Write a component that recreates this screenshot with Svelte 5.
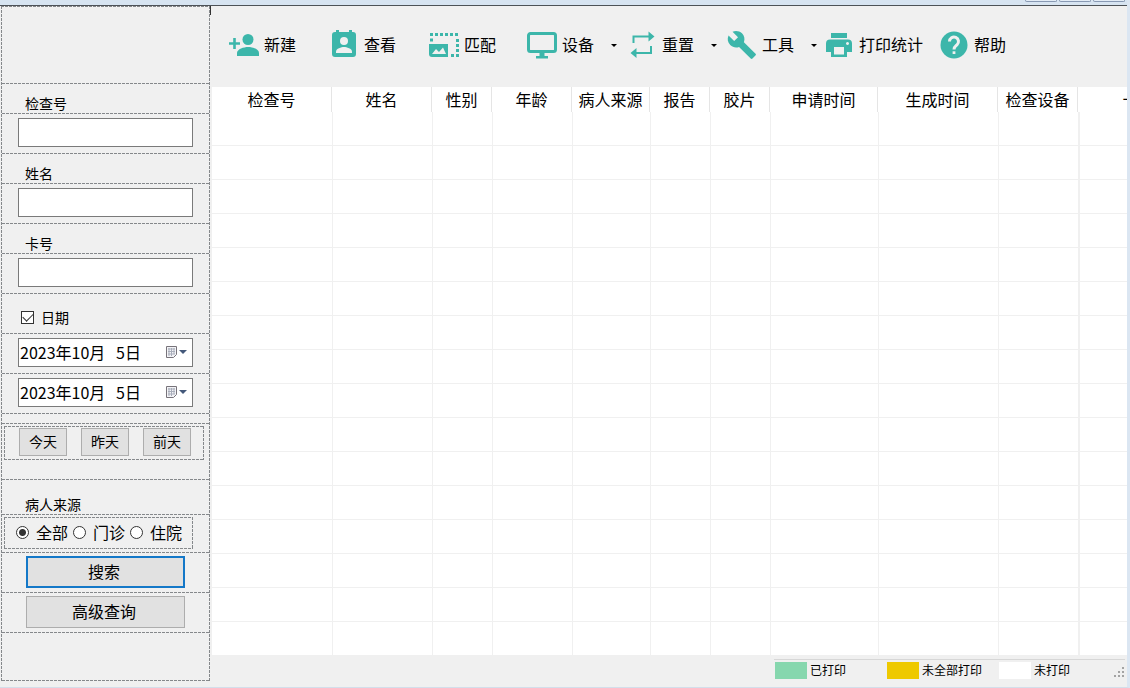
<script lang="ts">
  let examNo = $state('');
  let patientName = $state('');
  let cardNo = $state('');
  let useDate = $state(true);
  let dateFrom = $state('2023年10月\u00a0\u00a0\u00a05日');
  let dateTo = $state('2023年10月\u00a0\u00a0\u00a05日');
  let source = $state('全部');

  const tools = [
    { icon: 'add', label: '新建' },
    { icon: 'view', label: '查看' },
    { icon: 'match', label: '匹配' },
    { icon: 'device', label: '设备', menu: true },
    { icon: 'reset', label: '重置', menu: true },
    { icon: 'wrench', label: '工具', menu: true },
    { icon: 'print', label: '打印统计' },
    { icon: 'help', label: '帮助' }
  ];

  const columns = [
    { title: '检查号', width: 120 },
    { title: '姓名', width: 100 },
    { title: '性别', width: 60 },
    { title: '年龄', width: 80 },
    { title: '病人来源', width: 78 },
    { title: '报告', width: 60 },
    { title: '胶片', width: 60 },
    { title: '申请时间', width: 108 },
    { title: '生成时间', width: 120 },
    { title: '检查设备', width: 80 },
    { title: '卡号', width: 122 }
  ];
  const tableWidth = columns.reduce((sum, c) => sum + c.width, 0);
  const rows = Array.from({ length: 16 });

  const days = ['今天', '昨天', '前天'];
  const sources = ['全部', '门诊', '住院'];

  const legend = [
    { label: '已打印', kind: 'done' },
    { label: '未全部打印', kind: 'partial' },
    { label: '未打印', kind: 'none' }
  ];
</script>

<svelte:head>
  <title>检查列表</title>
</svelte:head>

{#snippet toolIcon(name: string)}
  <svg class="tool-icon" viewBox="0 0 30 30" width="30" height="30" aria-hidden="true">
    {#if name === 'add'}
      <circle cx="19" cy="9.5" r="5.5" />
      <path d="M8 26v-3c0-4 7-6 11-6s11 2 11 6v3z" />
      <path d="M4.2 8h2.6v4.2H11v2.6H6.800V19H4.200v-4.200H0v-2.600h4.200z" />
    {:else if name === 'view'}
      <path d="M6 2H7V0h3v2h10V0h3v2h1a3 3 0 0 1 3 3v19a3 3 0 0 1-3 3H6a3 3 0 0 1-3-3V5a3 3 0 0 1 3-3z" />
      <circle class="hole" cx="15" cy="11" r="4" />
      <path class="hole" d="M7 23v-1.500c0-2.800 5.300-4.500 8-4.500s8 1.700 8 4.500V23z" />
    {:else if name === 'match'}
      <path d="M0 14h19v13H3a3 3 0 0 1-3-3z" />
      <path class="hole" d="M3 24l4-5 3 3 4-4.500 3 6.500z" />
      <path class="dots" d="M1 4.500h29M1 10h3M28.500 9v18M22 25.500h4" />
    {:else if name === 'device'}
      <path class="line thick" d="M3.500 3.500h23a2 2 0 0 1 2 2v14a2 2 0 0 1-2 2h-23a2 2 0 0 1-2-2v-14a2 2 0 0 1 2-2z" />
      <path d="M12.500 22h5v4H21v2.500H9V26h3.500z" />
    {:else if name === 'reset'}
      <path class="line" d="M6.500 13V6.500h16M24 16v7H8" />
      <path d="M21.500 1.500l6 5-6 5zM9.500 18l-6 5 6 5z" />
    {:else if name === 'wrench'}
      <path
        transform="translate(-0.500 -0.500) scale(1.280)"
        d="M22.700 19l-9.100-9.100c.9-2.300.4-5-1.500-6.900-2-2-5-2.400-7.400-1.300L9 6 6 9 1.600 4.700C.4 7.100.9 10.100 2.900 12.100c1.900 1.900 4.600 2.400 6.900 1.500l9.100 9.100c.4.4 1 .4 1.400 0l2.300-2.300c.5-.4.5-1.100.1-1.400z"
      />
    {:else if name === 'print'}
      <path d="M7 3h16v5H7z" />
      <path fill-rule="evenodd" d="M6 9.500h18a4 4 0 0 1 4 4V22h-5v5H7v-5H2v-8.500a4 4 0 0 1 4-4zM10 17v7.500h10V17zM23.500 12a1.500 1.500 0 1 0 .01 0z" />
    {:else if name === 'help'}
      <circle cx="15" cy="15" r="13.500" />
      <path class="mark" d="M10.500 11.500a4.500 4.500 0 1 1 7.500 3.300c-1.800 1.600-3 2.200-3 4.700" />
      <path class="hole" d="M13.600 21.300h2.800V24h-2.800z" />
    {/if}
  </svg>
{/snippet}

{#snippet datePicker(id: string, label: string)}
  <div class="date-box">
    {#if id === 'from'}
      <input type="text" aria-label={label} bind:value={dateFrom} />
    {:else}
      <input type="text" aria-label={label} bind:value={dateTo} />
    {/if}
    <button type="button" aria-label="选择日期">
      <svg viewBox="0 0 22 14" width="22" height="14" aria-hidden="true">
        <path d="M1.500 1.500h10v8l-3 3h-7z" fill="#f3f3f6" stroke="#77737a" />
        <path d="M3 4h7M3 6.500h7M3 9h7M4 3v8M6.500 3v8M9 3v6" stroke="#a9aebb" />
        <path d="M14 5h8l-4 4z" fill="#44587a" />
      </svg>
    </button>
  </div>
{/snippet}

<div class="window">
  <div class="title-strip">
    <button type="button" aria-label="最小化"></button>
    <button type="button" aria-label="最大化"></button>
    <button type="button" aria-label="关闭"></button>
  </div>

  <div class="body">
    <form class="sidebar" onsubmit={(e) => e.preventDefault()}>
      <div class="cell spacer"></div>
      <div class="cell caption"><label for="examNo">检查号</label></div>
      <div class="cell field"><input id="examNo" class="box" type="text" bind:value={examNo} /></div>
      <div class="cell caption"><label for="patientName">姓名</label></div>
      <div class="cell field"><input id="patientName" class="box" type="text" bind:value={patientName} /></div>
      <div class="cell caption"><label for="cardNo">卡号</label></div>
      <div class="cell field"><input id="cardNo" class="box" type="text" bind:value={cardNo} /></div>
      <div class="cell field check">
        <label><input type="checkbox" bind:checked={useDate} />日期</label>
      </div>
      <div class="cell field">{@render datePicker('from', '开始日期')}</div>
      <div class="cell field">{@render datePicker('to', '结束日期')}</div>
      <div class="cell gap"></div>
      <div class="cell days">
        <div class="panel day-panel">
          {#each days as day}
            <button type="button">{day}</button>
          {/each}
        </div>
      </div>
      <div class="cell caption source-caption"><span id="sourceLabel">病人来源</span></div>
      <div class="cell sources">
        <div class="panel source-panel" role="radiogroup" aria-labelledby="sourceLabel">
          {#each sources as item}
            <label><input type="radio" name="source" value={item} bind:group={source} />{item}</label>
          {/each}
        </div>
      </div>
      <div class="cell action"><button type="submit" class="primary">搜索</button></div>
      <div class="cell action"><button type="button">高级查询</button></div>
      <div class="cell rest"></div>
    </form>

    <main class="content">
      <nav class="toolbar">
        {#each tools as tool}
          <button type="button" class="tool">
            {@render toolIcon(tool.icon)}
            <span>{tool.label}</span>
            {#if tool.menu}
              <i class="arrow"></i>
            {/if}
          </button>
        {/each}
      </nav>

      <div class="list">
        <table style:width="{tableWidth}px">
          <colgroup>
            {#each columns as col}
              <col style:width="{col.width}px" />
            {/each}
          </colgroup>
          <thead>
            <tr>
              {#each columns as col}
                <th>{col.title}</th>
              {/each}
            </tr>
          </thead>
          <tbody>
            {#each rows as _}
              <tr>
                {#each columns as _col}
                  <td></td>
                {/each}
              </tr>
            {/each}
          </tbody>
        </table>
      </div>

      <footer class="status">
        <div class="legend">
          {#each legend as item}
            <div class="legend-item">
              <span class="swatch {item.kind}"></span>
              <span>{item.label}</span>
            </div>
          {/each}
          <svg class="grip" viewBox="0 0 12 12" width="12" height="12" aria-hidden="true">
            <path d="M9 0h2v2H9zM5 4h2v2H5zM9 4h2v2H9zM1 8h2v2H1zM5 8h2v2H5zM9 8h2v2H9z" fill="#a3a3a3" />
          </svg>
        </div>
      </footer>
    </main>
  </div>
</div>

<style>
  :global(body) {
    margin: 0;
    background: #f0f0f0;
  }

  .window {
    --dash: #85888b;
    --dash-x: repeating-linear-gradient(90deg, var(--dash) 0 3px, transparent 3px 4px);
    --dash-y: repeating-linear-gradient(180deg, var(--dash) 0 3px, transparent 3px 4px);
    display: flex;
    flex-direction: column;
    box-sizing: border-box;
    min-height: 100vh;
    border-right: 3px solid #dbe6f2;
    border-bottom: 1px solid #d3deea;
    background: #f0f0f0;
    color: #000;
    font: 16px/20px 'Noto Sans CJK SC', sans-serif;
  }

  .window * {
    box-sizing: border-box;
  }

  button,
  input {
    margin: 0;
    padding: 0;
    border-radius: 0;
    color: inherit;
    font: inherit;
  }

  .title-strip {
    display: flex;
    justify-content: flex-end;
    gap: 2px;
    height: 6px;
    padding-right: 2px;
    border-bottom: 1px solid #4d5257;
    background: #d7e4f1;
  }

  .title-strip button {
    width: 32px;
    height: 2px;
    border: 1px solid #8899b3;
    border-top: 0;
    border-radius: 0 0 3px 3px;
    background: #e3ecf6;
  }

  .body {
    display: flex;
    flex: 1;
  }

  /* search panel */
  .sidebar {
    flex: none;
    align-self: flex-start;
    width: 209px;
    margin: 0 2px 0 1px;
    padding: 1px 1px 0;
    background:
      var(--dash-x) top / 100% 1px no-repeat,
      var(--dash-y) left / 1px 100% no-repeat,
      var(--dash-y) right / 1px 100% no-repeat;
  }

  .cell {
    display: flex;
    align-items: flex-start;
    padding-bottom: 1px;
    background: var(--dash-x) bottom / 100% 1px no-repeat;
  }

  .spacer {
    height: 77px;
  }

  .gap {
    height: 10px;
  }

  .rest {
    height: 48px;
  }

  .caption {
    height: 30px;
    padding: 9px 0 0 23px;
    font-size: 14px;
  }

  .source-caption {
    height: 35px;
    padding-top: 14px;
  }

  .field {
    height: 40px;
    padding: 4px 16px 0;
  }

  .box,
  .date-box {
    width: 175px;
    height: 29px;
    border: 1px solid #7a7a7a;
    background: #fff;
  }

  .box {
    padding: 0 4px;
  }

  .date-box {
    display: flex;
    align-items: flex-start;
  }

  .date-box input {
    flex: 1;
    min-width: 0;
    height: 27px;
    padding: 0 0 2px 1px;
    border: 0;
    background: none;
    outline: none;
  }

  .date-box button {
    display: flex;
    width: 27px;
    padding-top: 6px;
    border: 0;
    background: none;
  }

  .check {
    padding: 13px 18px 0;
    font-size: 14px;
  }

  label {
    display: flex;
    align-items: center;
  }

  input[type='checkbox'],
  input[type='radio'] {
    appearance: none;
    flex: none;
    width: 13px;
    height: 13px;
    margin-right: 7px;
    border: 1px solid #333;
    background: #fff;
  }

  input[type='checkbox'] {
    display: grid;
    place-items: center;
    margin-left: 1px;
  }

  input[type='checkbox']:checked::before {
    content: '';
    width: 9px;
    height: 5px;
    margin-bottom: 3px;
    border: solid #333;
    border-width: 0 0 1px 1px;
    transform: rotate(-45deg);
  }

  input[type='radio'] {
    border-radius: 50%;
  }

  input[type='radio']:checked {
    background: radial-gradient(circle, #333 0 3px, #fff 4px);
  }

  .panel {
    display: flex;
    background:
      var(--dash-x) top / 100% 1px no-repeat,
      var(--dash-x) bottom / 100% 1px no-repeat,
      var(--dash-y) left / 1px 100% no-repeat,
      var(--dash-y) right / 1px 100% no-repeat;
  }

  .days {
    height: 56px;
    padding: 2px 2px 0;
  }

  .day-panel {
    gap: 14px;
    width: 200px;
    height: 34px;
    padding: 2px 0 0 15px;
  }

  .sidebar .panel button,
  .action button {
    padding-bottom: 2px;
    border: 1px solid #adadad;
    background: #e1e1e1;
  }

  .day-panel button {
    flex: none;
    width: 48px;
    height: 28px;
    font-size: 14px;
  }

  .sources {
    height: 38px;
    padding: 2px 2px 0;
  }

  .source-panel {
    align-items: center;
    gap: 5px;
    width: 189px;
    height: 32px;
    padding: 0 0 2px 12px;
  }

  .action {
    justify-content: center;
    height: 40px;
    padding-top: 3px;
  }

  .action button {
    width: 159px;
    height: 32px;
    padding-right: 3px;
  }

  .sidebar .action .primary {
    border: 2px solid #1478c8;
  }

  /* toolbar */
  .content {
    position: relative;
    display: flex;
    flex: 1;
    flex-direction: column;
    min-width: 0;
  }

  .content::before {
    content: '';
    position: absolute;
    top: 0;
    left: -2px;
    width: 1px;
    height: 9px;
    background: #333;
  }

  .toolbar {
    display: grid;
    grid-template-columns: 100px 100px 98px 100px 100px 97px 115px auto;
    justify-content: start;
    height: 81px;
    padding: 24px 0 0 17px;
  }

  .tool {
    display: flex;
    align-items: center;
    gap: 5px;
    height: 30px;
    border: 0;
    background: none;
    white-space: nowrap;
  }

  .tool span {
    padding-bottom: 2px;
  }

  .tool-icon {
    flex: none;
    fill: #3cb6aa;
  }

  .hole {
    fill: #f0f0f0;
  }

  .line,
  .dots,
  .mark {
    fill: none;
    stroke: #3cb6aa;
    stroke-width: 2;
  }

  .thick {
    stroke-width: 3;
  }

  .dots {
    stroke-width: 3;
    stroke-dasharray: 3 2;
  }

  .mark {
    stroke: #f0f0f0;
    stroke-width: 3;
  }

  .arrow {
    width: 0;
    margin-left: 12px;
    border: 3px solid transparent;
    border-top-color: #000;
    border-bottom: 0;
  }

  /* exam list */
  .list {
    overflow: hidden;
    background: #fff;
  }

  table {
    border-collapse: separate;
    border-spacing: 0;
    table-layout: fixed;
  }

  th {
    height: 25px;
    padding: 0 0 2px;
    border-right: 1px solid #e5e5e5;
    font-weight: normal;
    white-space: nowrap;
  }

  td {
    height: 34px;
    padding: 0;
    border-bottom: 1px solid #f0f0f0;
  }

  td + td {
    border-left: 1px solid #f0f0f0;
  }

  td:last-child {
    border-left-width: 2px;
  }

  /* print state legend */
  .status {
    display: flex;
    justify-content: flex-end;
    padding: 3px 2px 0 0;
  }

  .legend {
    display: flex;
    width: 351px;
    padding: 2px 0 0 1px;
    border-top: 1px solid #d7d7d7;
    font-size: 12px;
    line-height: 16px;
  }

  .legend-item {
    display: flex;
    flex: none;
    gap: 3px;
    width: 112px;
    white-space: nowrap;
  }

  .swatch {
    width: 32px;
    height: 17px;
  }

  .done {
    background: #86d7ae;
  }

  .partial {
    background: #eec900;
  }

  .none {
    background: #fff;
  }

  .grip {
    align-self: flex-end;
    margin-left: 2px;
  }
</style>
